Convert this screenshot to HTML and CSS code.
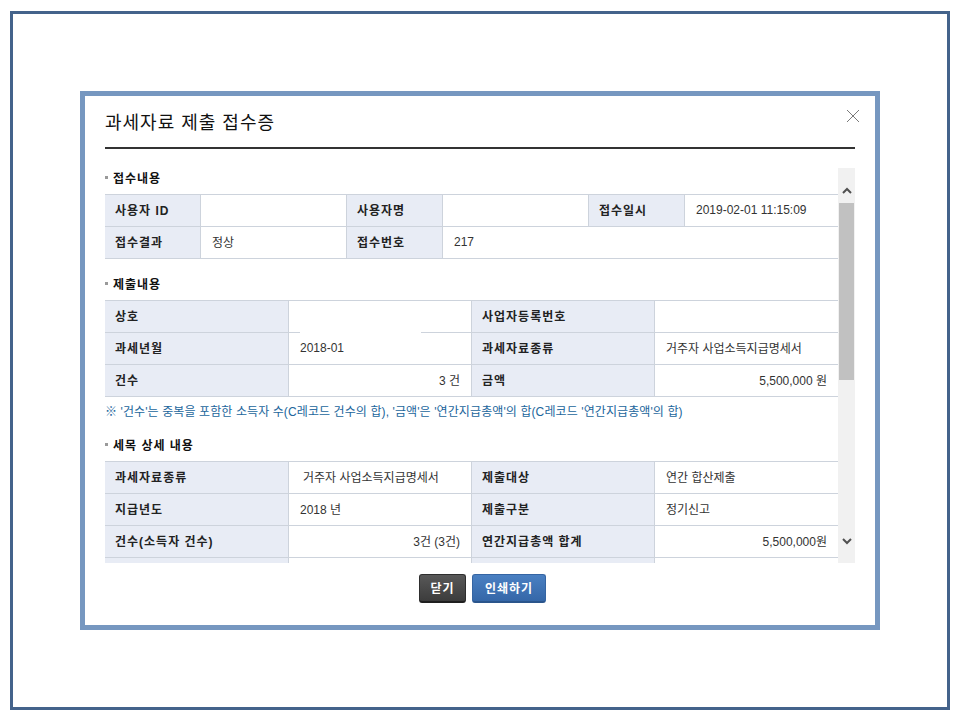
FILE: index.html
```html
<!DOCTYPE html>
<html lang="ko">
<head>
<meta charset="utf-8">
<title>과세자료 제출 접수증</title>
<link rel="stylesheet" href="styles.css">
</head>
<body>
<div class="frame">
  <div class="dialog">
    <div class="dlg-head">
      <h2 class="dlg-title">과세자료 제출 접수증</h2>
      <button class="dlg-close" type="button" aria-label="닫기">
        <svg width="14" height="14" viewBox="0 0 14 14"><path d="M1 1L13 13M13 1L1 13" fill="none" stroke="#7a7a7a" stroke-width="1"/></svg>
      </button>
    </div>
    <div class="dlg-body">
      <div class="scroll-content">
        <section class="sec">
          <h3 class="sec-title">접수내용</h3>
          <div class="grid g6">
            <div class="th rs">사용자 ID</div>
            <div class="td"></div>
            <div class="th">사용자명</div>
            <div class="td"></div>
            <div class="th">접수일시</div>
            <div class="td">2019-02-01 11:15:09</div>
            <div class="th rs">접수결과</div>
            <div class="td">정상</div>
            <div class="th">접수번호</div>
            <div class="td span3">217</div>
          </div>
        </section>
        <section class="sec">
          <h3 class="sec-title">제출내용</h3>
          <div class="grid g4">
            <div class="th rs">상호</div>
            <div class="td gap"></div>
            <div class="th">사업자등록번호</div>
            <div class="td"></div>
            <div class="th rs">과세년월</div>
            <div class="td">2018-01</div>
            <div class="th">과세자료종류</div>
            <div class="td">거주자 사업소득지급명세서</div>
            <div class="th rs">건수</div>
            <div class="td right">3 건</div>
            <div class="th">금액</div>
            <div class="td right">5,500,000 원</div>
          </div>
          <p class="note">※ '건수'는 중복을 포함한 소득자 수(C레코드 건수의 합), '금액'은 '연간지급총액'의 합(C레코드 '연간지급총액'의 합)</p>
        </section>
        <section class="sec">
          <h3 class="sec-title">세목 상세 내용</h3>
          <div class="grid g4">
            <div class="th rs">과세자료종류</div>
            <div class="td ind">거주자 사업소득지급명세서</div>
            <div class="th">제출대상</div>
            <div class="td">연간 합산제출</div>
            <div class="th rs">지급년도</div>
            <div class="td">2018 년</div>
            <div class="th">제출구분</div>
            <div class="td">정기신고</div>
            <div class="th rs">건수(소득자 건수)</div>
            <div class="td right">3건 (3건)</div>
            <div class="th">연간지급총액 합계</div>
            <div class="td right">5,500,000원</div>
            <div class="th rs"></div>
            <div class="td"></div>
            <div class="th"></div>
            <div class="td"></div>
          </div>
        </section>
      </div>
      <div class="scrollbar">
        <div class="sb-btn sb-up">
          <svg width="10" height="7" viewBox="0 0 10 7"><path d="M1 6L5 2L9 6" fill="none" stroke="#505050" stroke-width="2"/></svg>
        </div>
        <div class="sb-track"><div class="sb-thumb"></div></div>
        <div class="sb-btn sb-down">
          <svg width="10" height="7" viewBox="0 0 10 7"><path d="M1 1L5 5L9 1" fill="none" stroke="#505050" stroke-width="2"/></svg>
        </div>
      </div>
    </div>
    <div class="dlg-foot">
      <button class="btn btn-dark" type="button">닫기</button>
      <button class="btn btn-blue" type="button">인쇄하기</button>
    </div>
  </div>
</div>
</body>
</html>
```
FILE: styles.css
```css
* { box-sizing: border-box; }
html, body { margin: 0; padding: 0; background: #fff; }
body {
  width: 960px;
  height: 720px;
  overflow: hidden;
  font-family: "Liberation Sans", "Noto Sans CJK KR", sans-serif;
  color: #333;
}

.frame {
  margin: 11px 0 0 10px;
  width: 940px;
  height: 699px;
  border: 3px solid #44638b;
  display: flex;
  align-items: center;
  justify-content: center;
}

.dialog {
  position: relative;
  width: 800px;
  height: 539px;
  border: 5px solid #7697c0;
  background: #fff;
  padding: 0 20px;
  display: flex;
  flex-direction: column;
}

.dlg-head {
  height: 53px;
  padding-top: 14px;
  border-bottom: 2px solid #333;
}
.dlg-title {
  margin: 0;
  font-size: 18px;
  font-weight: normal;
  line-height: 26px;
  letter-spacing: 1px;
  color: #111;
}
.dlg-close {
  position: absolute;
  top: 13px;
  right: 15px;
  width: 14px;
  height: 14px;
  padding: 0;
  border: 0;
  background: none;
  display: block;
}
.dlg-close svg { display: block; }

.dlg-body {
  display: flex;
  height: 395px;
  margin-top: 19px;
}
.scroll-content {
  width: 733px;
  overflow: hidden;
}

.scrollbar {
  width: 17px;
  background: #f1f1f1;
  display: flex;
  flex-direction: column;
}
.sb-btn {
  height: 35px;
  display: flex;
  align-items: center;
  justify-content: center;
}
.sb-btn svg { display: block; }
.sb-up { padding-top: 9px; }
.sb-down { padding-bottom: 9px; }
.sb-track { flex: 1; padding: 0 1px; }
.sb-thumb { height: 177px; background: #c1c1c1; }

.sec { margin-bottom: 15px; }
.sec-title {
  margin: 0 0 6px;
  padding-top: 1px;
  height: 20px;
  font-size: 12px;
  font-weight: bold;
  line-height: 20px;
  letter-spacing: 1px;
  color: #111;
}
.sec-title::before {
  content: "";
  display: inline-block;
  width: 3px;
  height: 3px;
  background: #9a9a9a;
  margin-right: 5px;
  vertical-align: 4px;
}

.grid {
  display: grid;
  border-top: 1px solid #cdd3dc;
}
.g6 { grid-template-columns: 95px 146px 96px 146px 96px 154px; }
.g4 { grid-template-columns: 183px 183px 183px 184px; }

.grid > div {
  height: 32px;
  border-bottom: 1px solid #cdd3dc;
  border-left: 1px solid #cdd3dc;
  display: flex;
  align-items: center;
  padding: 0 11px 2px;
  font-size: 12px;
  white-space: nowrap;
}
.grid > .rs { border-left: 0; }
.th {
  background: #e8ecf5;
  font-weight: bold;
  letter-spacing: 1px;
  color: #222;
  padding-left: 10px !important;
}
.td { color: #333; }
.right { justify-content: flex-end; }
.span3 { grid-column: span 3; }
.ind { padding-left: 14px !important; }
.gap { position: relative; }
.gap::after {
  content: "";
  position: absolute;
  left: 11px;
  bottom: -1px;
  width: 121px;
  height: 1px;
  background: #fff;
}

.note {
  margin: 7px 0 0;
  font-size: 12px;
  line-height: 16px;
  letter-spacing: 0.1px;
  color: #22669c;
  white-space: nowrap;
}

.dlg-foot {
  display: flex;
  justify-content: center;
  gap: 6px;
  padding-top: 11px;
  padding-left: 5px;
}
.btn {
  height: 29px;
  padding: 0 0 1px;
  border-radius: 3px;
  font-family: "Liberation Sans", "Noto Sans CJK KR", sans-serif;
  font-size: 12px;
  font-weight: bold;
  letter-spacing: 1px;
  color: #fff;
  display: flex;
  align-items: center;
  justify-content: center;
}
.btn-dark {
  width: 47px;
  background: linear-gradient(#585858, #3c3c3c);
  border: 1px solid #2e2e2e;
  border-bottom: 2px solid #1f1f1f;
}
.btn-blue {
  width: 74px;
  background: linear-gradient(#4a80c2, #3567a8);
  border: 1px solid #3565a3;
  border-bottom: 2px solid #2a558c;
}
```
